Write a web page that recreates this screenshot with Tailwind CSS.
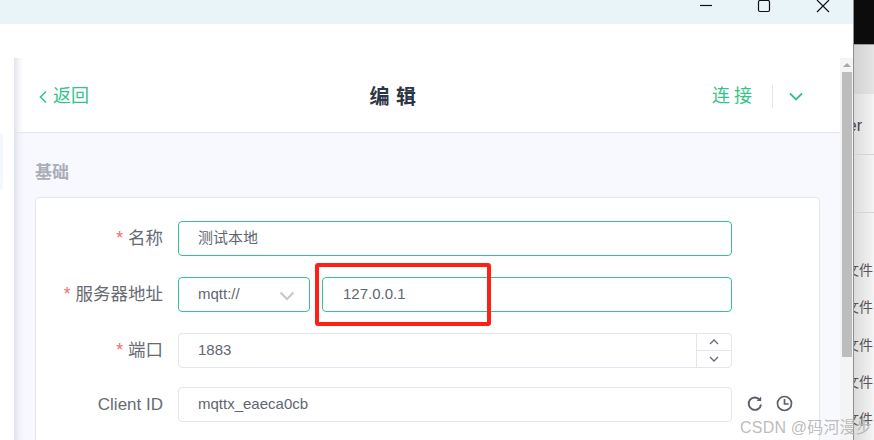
<!DOCTYPE html>
<html lang="zh">
<head>
  <meta charset="UTF-8" />
  <title>编辑</title>
  <script src="https://cdn.jsdelivr.net/npm/@tailwindcss/browser@4"></script>
</head>
<body class="w-[874px] h-[440px] overflow-hidden bg-white font-['Liberation_Sans','Noto_Sans_CJK_SC',sans-serif]">
  <div class="relative flex w-[874px] h-[440px] overflow-hidden">

    <!-- app window -->
    <div class="w-[853px] h-[440px] flex flex-col shrink-0">
      <div class="h-[24px] shrink-0 bg-[#e9f4f8] flex justify-end text-black">
        <svg class="w-[14px] h-[12px] mr-[44px]" viewBox="0 0 14 12" fill="none" stroke="#111" stroke-width="1.2"><path d="M1 5.5h12"/></svg>
        <svg class="w-[14px] h-[14px] mr-[45px]" viewBox="0 0 14 14" fill="none" stroke="#111" stroke-width="1.2"><rect x="1.5" y="0.5" width="11" height="11" rx="1.5"/></svg>
        <svg class="w-[14px] h-[14px] mr-[23px]" viewBox="0 0 14 14" fill="none" stroke="#111" stroke-width="1.2"><path d="M1 0l12 12M13 0L1 12"/></svg>
      </div>

      <div class="flex flex-1 min-h-0 bg-white pt-[34px]">
        <!-- sidebar edge -->
        <div class="w-[14px] shrink-0 pt-[75px]">
          <div class="w-[3px] h-[57px] ml-0 bg-[#f4f7fc] rounded-r-[4px]"></div>
        </div>

        <!-- edit panel -->
        <div class="w-[826px] shrink-0 flex flex-col shadow-[inset_9px_0_8px_-7px_#d5d8e6]">
          <div class="h-[75px] shrink-0 border-b border-[#e3e5f0] flex items-center justify-between pl-[24px] pr-[37px] pt-[3px]">
            <div class="flex items-center text-[18px] text-[#34c388] w-[200px]">
              <svg class="w-[10px] h-[14px] mr-[5px]" viewBox="0 0 10 14" fill="none" stroke="#34c388" stroke-width="1.6"><path d="M8 1.5L2.5 7 8 12.5"/></svg>
              <span>返回</span>
            </div>
            <h1 class="text-[20px] font-bold text-[#2c3544] tracking-[0.5px] ml-[-55px]">编 辑</h1>
            <div class="flex items-center w-[200px] justify-end">
              <span class="text-[18px] text-[#34c388] tracking-[4px] mr-[16px]">连接</span>
              <span class="w-px h-[23px] bg-[#e3e5f0] mr-[16px]"></span>
              <svg class="w-[14px] h-[9px]" viewBox="0 0 14 9" fill="none" stroke="#34c388" stroke-width="1.8"><path d="M1 1.5l6 6 6-6"/></svg>
            </div>
          </div>

          <div class="flex-1 min-h-0 bg-[#f8f9fe] pl-[21px] pr-[20px] shadow-[inset_9px_0_8px_-7px_#d5d8e6]">
            <div class="h-[64px] flex items-center pt-[16px] text-[17px] font-bold text-[#a9aeb8]">基础</div>
            <div class="bg-white border border-[#e3e5f0] rounded-[4px] h-[300px] pt-[23px] pl-[142px] pr-[87px]">

              <div class="flex items-center h-[35px] mb-[21px]">
                <label class="w-[120px] ml-[-135px] mr-[15px] text-right text-[17.5px] text-[#666b73] whitespace-nowrap"><span class="text-[#f56c6c] mr-[5px]">*</span>名称</label>
                <div class="flex-1 h-[35px] border border-[#34c388] rounded-[4px] pl-[19px] flex items-center text-[15px] text-[#5f6670]">测试本地</div>
              </div>

              <div class="flex items-center h-[35px] mb-[21px]">
                <label class="w-[120px] ml-[-135px] mr-[15px] text-right text-[17.5px] text-[#666b73] whitespace-nowrap"><span class="text-[#f56c6c] mr-[5px]">*</span>服务器地址</label>
                <div class="w-[132px] h-[35px] border border-[#34c388] rounded-[4px] pl-[19px] pr-[14px] mr-[12px] flex items-center justify-between text-[15px] text-[#5f6670]">
                  <span>mqtt://</span>
                  <svg class="w-[16px] h-[10px] mt-[3px]" viewBox="0 0 16 10" fill="none" stroke="#c4c7cc" stroke-width="2"><path d="M1.5 1.5L8 8l6.5-6.5"/></svg>
                </div>
                <div class="flex-1 h-[35px] border border-[#34c388] rounded-[4px] pl-[20px] flex items-center text-[15px] text-[#5f6670]">127.0.0.1</div>
              </div>

              <div class="flex items-center h-[35px] mb-[19px]">
                <label class="w-[120px] ml-[-135px] mr-[15px] text-right text-[17.5px] text-[#666b73] whitespace-nowrap"><span class="text-[#f56c6c] mr-[5px]">*</span>端口</label>
                <div class="flex-1 h-[35px] border border-[#e3e5f0] rounded-[4px] pl-[19px] flex items-center justify-between text-[15px] text-[#5f6670]">
                  <span>1883</span>
                  <div class="w-[35px] h-full border-l border-[#e3e5f0] flex flex-col">
                    <div class="flex-1 border-b border-[#e3e5f0] flex items-center justify-center">
                      <svg class="w-[10px] h-[6px]" viewBox="0 0 10 6" fill="none" stroke="#666b73" stroke-width="1.3"><path d="M1 5l4-4 4 4"/></svg>
                    </div>
                    <div class="flex-1 flex items-center justify-center">
                      <svg class="w-[10px] h-[6px]" viewBox="0 0 10 6" fill="none" stroke="#666b73" stroke-width="1.3"><path d="M1 1l4 4 4-4"/></svg>
                    </div>
                  </div>
                </div>
              </div>

              <div class="flex items-center h-[35px] relative">
                <label class="w-[120px] ml-[-135px] mr-[15px] text-right text-[17px] text-[#666b73] whitespace-nowrap">Client ID</label>
                <div class="flex-1 h-[35px] border border-[#e3e5f0] rounded-[4px] pl-[19px] flex items-center text-[15px] text-[#5f6670]">mqttx_eaeca0cb</div>
                <div class="absolute left-[568px] top-[8px] flex gap-[13px]">
                  <svg class="w-[17px] h-[17px]" viewBox="0 0 17 17" fill="none" stroke="#5a6069" stroke-width="1.9"><path d="M14 5.2A6.2 6.2 0 1 0 15 9.5"/><path d="M15.2 1.5v4.6h-4.6z" fill="#5a6069" stroke="none"/></svg>
                  <svg class="w-[17px] h-[17px]" viewBox="0 0 17 17" fill="none" stroke="#5a6069" stroke-width="1.7"><circle cx="8.5" cy="8.5" r="7"/><path d="M8.5 4v5h4.2"/></svg>
                </div>
              </div>
            </div>
          </div>
        </div>

        <!-- scrollbar -->
        <div class="w-[13px] shrink-0 bg-[#f4f4f4] flex flex-col items-center">
          <div class="h-[14px] flex items-center justify-center">
            <div class="w-0 h-0 border-x-[4px] border-x-transparent border-b-[4px] border-b-[#a8a8a8]"></div>
          </div>
          <div class="w-[10px] h-[285px] bg-[#bdbdbd]"></div>
        </div>
      </div>
    </div>

    <!-- window behind -->
    <div class="w-[21px] h-[440px] shrink-0 flex flex-col border-l border-[#8f8f8f] text-[14px] text-[#555]">
      <div class="h-[44px] bg-[#0c0c0c]"></div>
      <div class="h-[50px] bg-linear-to-r from-[#d2d2d2] to-[#e4e4e4] border-t border-[#9a9a9a]"></div>
      <div class="flex-1 bg-linear-to-r from-[#dcdcdc] to-[#f4f4f4] overflow-hidden">
        <div class="h-[61px] border-b border-[#d4d4d4] flex justify-end items-center pt-[3px] pr-[12px] text-[16px] text-[#444]">er</div>
        <div class="h-[58px] border-b border-[#d4d4d4]"></div>
        <div class="flex flex-col items-start pt-[48px] gap-[19.3px] ml-[-9px] whitespace-nowrap">
          <span class="leading-[18px]">文件</span>
          <span class="leading-[18px]">文件</span>
          <span class="leading-[18px]">文件</span>
          <span class="leading-[18px]">文件</span>
          <span class="leading-[18px]">文件</span>
        </div>
      </div>
    </div>

    <!-- annotation and watermark sit over the screenshot -->
    <div class="absolute left-[315px] top-[263px] w-[176px] h-[63px] border-[4px] border-[#ff2015] rounded-[3px]"></div>
    <div class="absolute left-[740px] top-[416px] text-[16px] text-[#b4b4b4]/90 tracking-[0.2px] whitespace-nowrap">CSDN @码河漫步</div>
  </div>
</body>
</html>
